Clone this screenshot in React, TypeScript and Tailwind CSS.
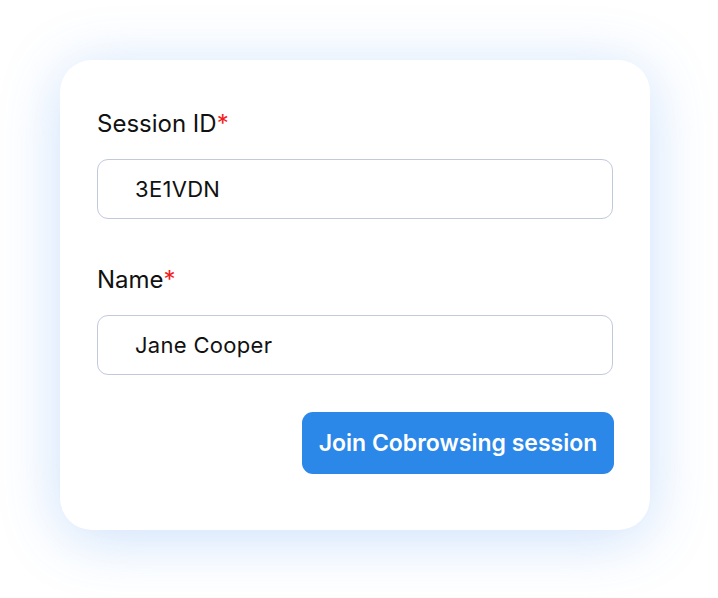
import React from "react";

const fieldClass =
  "w-full h-[60px] rounded-[11px] border-[1.5px] border-[#c3c9dd] bg-white pl-[37px] pr-4 text-[22px] tracking-[0.3px] text-[#111] outline-none";

const Field = ({ label, value }: { label: string; value: string }) => (
  <div className="flex flex-col">
    <label className="text-[24px] leading-[29px] text-[#111]">
      {label}
      <span className="text-[#f51b1b]">*</span>
    </label>
    <input className={`${fieldClass} mt-[21px]`} defaultValue={value} />
  </div>
);

export default function App() {
  return (
    <div
      className="min-h-screen w-full bg-white pl-[60px] pt-[60px]"
      style={{ fontFamily: "Inter, 'Noto Sans', sans-serif" }}
    >
      <div className="w-[590px] h-[470px] rounded-[32px] bg-white px-[37px] pt-[49px] shadow-[0_8px_60px_rgba(70,145,240,0.28)]">
        <Field label="Session ID" value="3E1VDN" />
        <div className="mt-[46px]">
          <Field label="Name" value="Jane Cooper" />
        </div>
        <div className="mt-[37px] flex justify-end">
          <button className="h-[62px] w-[312px] -mr-[1px] rounded-[11px] bg-[#2b87e8] text-[23px] font-semibold text-white">
            Join Cobrowsing session
          </button>
        </div>
      </div>
    </div>
  );
}
